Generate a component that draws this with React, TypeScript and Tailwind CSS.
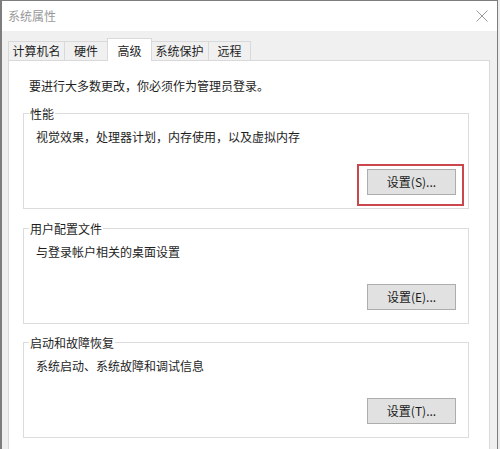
import React from "react";

const font = "font-['Microsoft_YaHei','Noto_Sans_CJK_SC',sans-serif]";

const tabs = [
  { label: "计算机名", w: "w-[57px]" },
  { label: "硬件", w: "w-[43px]" },
  { label: "高级", w: "w-[45px]", active: true },
  { label: "系统保护", w: "w-[58px]" },
  { label: "远程", w: "w-[42px]" },
];

function GroupBox({
  title,
  desc,
  button,
  highlight,
  className,
}: {
  title: string;
  desc: string;
  button: string;
  highlight?: boolean;
  className?: string;
}) {
  return (
    <div className={`relative border border-[#dcdcdc] pl-[12px] pr-[12px] pt-[15px] pb-[13px] ${className ?? ""}`}>
      <span className="absolute -top-[9px] left-[5px] bg-white px-[1px] leading-[17px] text-[#1e1e1e]">{title}</span>
      <div className="leading-[16px] text-[#1e1e1e]">{desc}</div>
      <div className="mt-[24px] flex justify-end">
        <div className="relative">
          <button className="h-[26px] w-[89px] border border-[#adadad] bg-[#e1e1e1] text-[12px] leading-[16px] text-[#1a1a1a]">
            {button}
          </button>
          {highlight && (
            <div className="pointer-events-none absolute -left-[10px] -right-[8px] -top-[5px] -bottom-[11px] border-2 border-[#c9474d]" />
          )}
        </div>
      </div>
    </div>
  );
}

export default function App() {
  return (
    <div className={`h-[449px] w-[500px] overflow-hidden bg-[#ececec] text-[12px] ${font}`}>
      <div className="flex h-full w-[498px] flex-col border-l-2 border-r border-t border-[#7d7d7d]">
        {/* title bar */}
        <div className="flex h-[30px] shrink-0 items-center justify-between bg-white pl-[6px] pr-[9px]">
          <span className="leading-[16px] text-[#999]">系统属性</span>
          <svg width="12" height="12" viewBox="0 0 12 12" className="mb-[1px]">
            <path d="M0.5 0.5 L11.5 11.5 M11.5 0.5 L0.5 11.5" stroke="#9a9a9a" strokeWidth="1" />
          </svg>
        </div>

        <div className="flex flex-1 flex-col bg-[#f0f0f0] pl-[6px] pr-[7px]">
          {/* tabs */}
          <div className="flex shrink-0 items-end pt-[7px]">
            {tabs.map((t) =>
              t.active ? (
                <div
                  key={t.label}
                  className={`relative z-10 -mx-px h-[23px] ${t.w} border border-b-0 border-[#d9d9d9] bg-white pt-[3px] text-center leading-[17px] text-[#1e1e1e]`}
                >
                  {t.label}
                </div>
              ) : (
                <div
                  key={t.label}
                  className={`mb-px h-[19px] ${t.w} border border-b-0 border-l-0 first:border-l border-[#d9d9d9] bg-[#f0f0f0] text-center leading-[17px] text-[#1e1e1e]`}
                >
                  {t.label}
                </div>
              )
            )}
          </div>

          {/* panel */}
          <div className="-mt-px flex-1 border border-b-0 border-[#d9d9d9] bg-white px-[14px] pt-[17px]">
            <div className="pl-[6px] leading-[16px] text-[#1e1e1e]">要进行大多数更改，你必须作为管理员登录。</div>
            <div className="mr-[6px]">
              <GroupBox
                className="mt-[19px]"
                title="性能"
                desc="视觉效果，处理器计划，内存使用，以及虚拟内存"
                button="设置(S)..."
                highlight
              />
              <GroupBox
                className="mt-[19px]"
                title="用户配置文件"
                desc="与登录帐户相关的桌面设置"
                button="设置(E)..."
              />
              <GroupBox
                className="mt-[18px]"
                title="启动和故障恢复"
                desc="系统启动、系统故障和调试信息"
                button="设置(T)..."
              />
            </div>
          </div>
        </div>
      </div>
    </div>
  );
}
